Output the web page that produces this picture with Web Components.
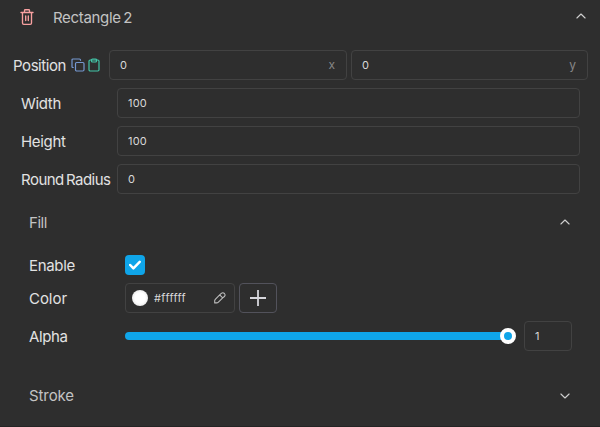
<!DOCTYPE html>
<html lang="en"><head><meta charset="utf-8"><title>Rectangle 2</title>
<style>
html,body{margin:0;background:#2e2e2e}
body{width:600px;height:427px;overflow:hidden;font-family:Inter,"Liberation Sans",sans-serif;color:#e2e2e2}
</style></head><body>
<property-panel></property-panel>
<script>
const define=(name,html,setup)=>customElements.define(name,class extends HTMLElement{
  connectedCallback(){
    if(this.shadowRoot)return;
    const t=document.createElement('template');t.innerHTML=html;
    this.attachShadow({mode:'open'}).append(t.content.cloneNode(true));
    if(setup)setup(this,this.shadowRoot);
  }
});
// Text whose tracking is adjusted so that it fills the width given in "fit".
define('fit-text',`<style>:host{display:inline-block;white-space:pre;flex:none;word-spacing:-1.5px}span{display:inline-block}</style><span><slot></slot></span>`,(el,r)=>{
  const s=r.querySelector('span'),n=el.textContent.length;
  const w=s.getBoundingClientRect().width;
  s.style.letterSpacing=((+el.getAttribute('fit')-w)/n)+'px';
});
const icons={
 trash:['0 0 16 18','<path d="M2 4.500h12M5.500 4.300V2.500Q5.500 1.700 6.300 1.700h3.400q.8 0 .8.800V4.300M3.500 4.700V15q0 1.300 1.300 1.300h6.400q1.300 0 1.300-1.300V4.700M6.700 8v4.500M9.300 8v4.500"/>'],
 copy:['0 0 14 14','<rect x="4.500" y="4.500" width="8.500" height="8.500" rx="1.200"/><path d="M2.300 9.500H2Q1 9.500 1 8.500V2Q1 1 2 1h6.500q1 0 1 1v.300"/>'],
 paste:['0 0 12 14','<rect x="1" y="2" width="10" height="11" rx="1.200"/><path d="M3.500 2v1q0 1 1 1h3q1 0 1-1V2q0-1-1-1h-3q-1 0-1 1"/>'],
 up:['0 0 10 6','<path d="M.9 5 5 1l4.100 4"/>'],
 down:['0 0 10 6','<path d="M.9 1 5 5l4.100-4"/>'],
 pipette:['0 0 12 12','<path d="M5.700 2.900 1.500 7.100Q.6 8 .7 9v1.900h1.900q1 0 1.800-.8L8.700 5.900M5.700 2.900 7.300 1.400Q8.900.1 10.400 1.500q1.300 1.500 0 3L8.700 5.900M5.700 2.900l3 3"/>'],
 check:['0 0 12 10','<path d="m1.200 5 3.200 3.300 6.300-6.400"/>'],
 plus:['0 0 16 16','<path d="M8 0v16M0 8h16"/>']
};
define('ui-icon','<style>:host{display:block;flex:none}svg{display:block;width:100%;height:100%;fill:none;stroke:currentColor;stroke-linecap:round;stroke-linejoin:round}</style><svg></svg>',(el,r)=>{
  const [v,p]=icons[el.getAttribute('name')],s=r.querySelector('svg');
  s.setAttribute('viewBox',v);s.innerHTML=p;s.style.strokeWidth=el.getAttribute('weight')||1.1;
});
define('field-box',`<style>:host{box-sizing:border-box;height:30px;border:1px solid #424242;border-radius:4px;display:flex;align-items:center;padding:0 10px;font-size:11px;color:#d8d8d8;line-height:14px;min-width:0}slot[name=unit]{display:block;}.sp{flex:1}::slotted(span[slot=unit]){color:#868686;font-size:12px;padding:0 1px 2px 0}</style><slot></slot><span class="sp"></span><slot name="unit"></slot>`);
define('section-head',`<style>:host{display:flex;align-items:center;justify-content:space-between;font-size:15px;line-height:20px;color:#c3c3c3}ui-icon{width:10px;height:6px;color:#d0d0d0;margin-bottom:var(--lift,0px)}.l{display:flex;align-items:center}</style><div class="l"><slot></slot></div>`,(el,r)=>{
  const i=document.createElement('ui-icon');
  i.setAttribute('name',el.hasAttribute('open')?'up':'down');r.append(i);
});
define('property-row',`<style>:host{display:grid;grid-template-columns:96px 1fr;align-items:center;font-size:15px;line-height:20px}.t{padding-top:2px}.c{display:flex;align-items:center;min-width:0}::slotted(field-box[wide]){flex:1}</style><div class="t"><slot name="label"></slot></div><div class="c"><slot></slot></div>`);
define('check-box',`<style>:host{width:20px;height:20px;border-radius:4px;background:#0fa5e9;display:grid;place-items:center}ui-icon{width:12px;height:10px;color:#fff}</style><ui-icon name="check" weight="2.5"></ui-icon>`);
define('range-slider',`<style>:host{flex:1;height:16px;display:flex;align-items:center}i{flex:1;height:8px;background:#0fa5e9;border-radius:4px 0 0 4px;margin-right:-8px}b{box-sizing:border-box;width:16px;height:16px;border:4px solid #fff;border-radius:50%;background:#0fa5e9;flex:none}</style><i></i><b></b>`);
define('property-panel',`<style>
:host{box-sizing:border-box;display:flex;flex-direction:column;height:427px;border-bottom:1px solid #242424}
.main{height:35px;padding:0 14.5px 3px 19px;box-sizing:border-box}
.trash{width:16px;height:18px;color:#f9a0a0;margin:2px 18px 0 0}
.trash+fit-text{padding-top:3px}
.pos{display:flex;align-items:center;margin:15px 12px 0 13px;height:30px;font-size:15px;line-height:20px}
.pos>fit-text{padding-top:2px}
.copy{width:14px;height:14px;color:#7597cf;margin-left:5px}
.paste{width:12px;height:14px;color:#43c5a8;margin-left:3px}
.pos field-box{width:238px;margin-left:9px}.pos field-box+field-box{width:237px;margin-left:4px}
.dims{display:grid;gap:8px;margin:8px 20px 0 21px}
.section{margin:0 30.5px 0 29px;--lift:2px}
.section fit-text{padding-top:1px}
.body{margin:21px 28px 0 29px}
.color{width:110px;padding:0 8px 0 6px}
.swatch{width:16px;height:16px;border-radius:50%;background:radial-gradient(circle,#fff 45%,#e9e9e9 75%);margin-right:6px;flex:none}
.pip{width:12px;height:12px;color:#bdbdbd}
.add{box-sizing:border-box;width:38px;height:30px;margin-left:4px;padding:0;border:1px solid #52525b;border-radius:4px;background:none;color:#d6d6dc;display:grid;place-items:center}
.add ui-icon{width:16px;height:16px}
.value{width:48px;margin-left:8px}
</style>
<section-head class="main" open><ui-icon class="trash" name="trash" weight="1.35"></ui-icon><fit-text fit="79">Rectangle 2</fit-text></section-head>
<div class="pos"><fit-text fit="53">Position</fit-text><ui-icon class="copy" name="copy" weight="1.2"></ui-icon><ui-icon class="paste" name="paste" weight="1.2"></ui-icon><field-box><fit-text fit="8">0</fit-text><span slot="unit">x</span></field-box><field-box><fit-text fit="8">0</fit-text><span slot="unit">y</span></field-box></div>
<div class="dims">
<property-row><fit-text slot="label" fit="40">Width</fit-text><field-box wide><fit-text fit="19">100</fit-text></field-box></property-row>
<property-row><fit-text slot="label" fit="44.500">Height</fit-text><field-box wide><fit-text fit="19">100</fit-text></field-box></property-row>
<property-row><fit-text slot="label" fit="89.500">Round Radius</fit-text><field-box wide><fit-text fit="8">0</fit-text></field-box></property-row>
</div>
<section-head class="section" style="margin-top:18px" open><fit-text fit="18">Fill</fit-text></section-head>
<div class="body">
<property-row><fit-text slot="label" fit="46">Enable</fit-text><check-box></check-box></property-row>
<property-row style="margin-top:7px"><fit-text slot="label" fit="38">Color</fit-text><field-box class="color"><span class="swatch"></span><fit-text fit="32">#ffffff</fit-text><ui-icon class="pip" slot="unit" name="pipette" weight="1.1"></ui-icon></field-box><button class="add" aria-label="Add"><ui-icon name="plus" weight="1.8"></ui-icon></button></property-row>
<property-row style="margin-top:8px"><fit-text slot="label" fit="38.500">Alpha</fit-text><range-slider></range-slider><field-box class="value"><fit-text fit="6">1</fit-text></field-box></property-row>
</div>
<section-head class="section" style="margin-top:34px;--lift:-1px"><fit-text fit="45">Stroke</fit-text></section-head>`);
</script></body></html>
